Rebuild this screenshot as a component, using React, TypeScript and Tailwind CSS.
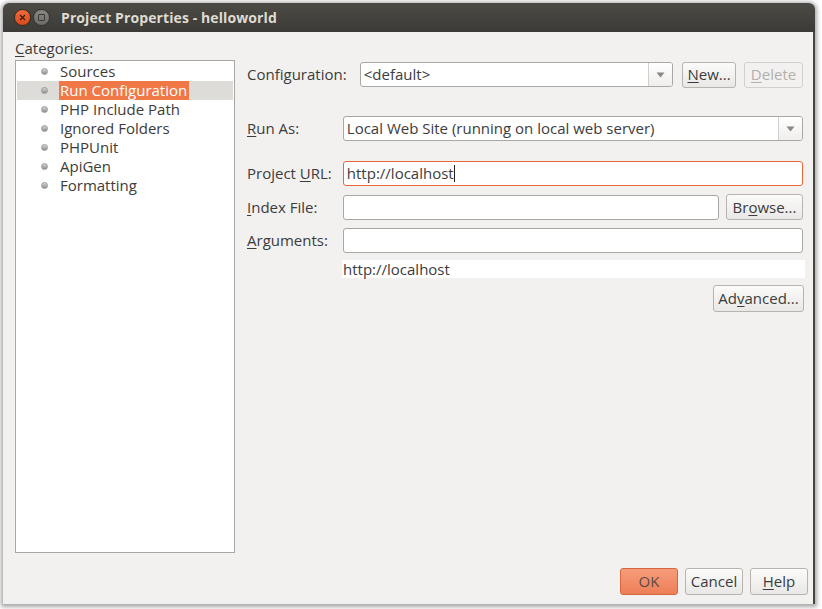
import React from "react";

const font = { fontFamily: '"Open Sans", "Noto Sans", sans-serif' };

function U({ children }: { children: React.ReactNode }) {
  return <span className="underline underline-offset-[2px] decoration-[1px]">{children}</span>;
}

function Btn({ children, w, disabled, primary }: { children: React.ReactNode; w: string; disabled?: boolean; primary?: boolean }) {
  const base = "flex items-center justify-center rounded-[3px] border text-[15px] shrink-0";
  const cls = primary
    ? "border-[#d4653f] bg-gradient-to-b from-[#f59c7a] to-[#ee7f57] text-[#5b4b45]"
    : disabled
    ? "border-[#d3d0cb] bg-[#f2f1f0] text-[#b3b0ab]"
    : "border-[#b8b4ad] bg-gradient-to-b from-[#fbfbfa] to-[#e9e8e6] text-[#3c3c3c]";
  return <div className={`${base} ${cls} ${w}`}>{children}</div>;
}

function Arrow() {
  return (
    <svg width="9" height="6" viewBox="0 0 9 6">
      <path d="M0.5 0.5 L8.5 0.5 L4.5 5.5 Z" fill="#8a8884" />
    </svg>
  );
}

function Combo({ text, w }: { text: string; w: string }) {
  return (
    <div className={`flex h-[25px] ${w} rounded-[3px] border border-[#a9a7a3] bg-white overflow-hidden`}>
      <div className="flex-1 flex items-center pl-[3px] text-[15px] text-[#3c3c3c] whitespace-nowrap">{text}</div>
      <div className="w-[24px] flex items-center justify-center border-l border-[#d2d0cc] bg-gradient-to-b from-white to-[#efeeec]">
        <Arrow />
      </div>
    </div>
  );
}

function Field({ w, focus, children }: { w: string; focus?: boolean; children?: React.ReactNode }) {
  return (
    <div
      className={`flex items-center h-[25px] ${w} rounded-[3px] border ${focus ? "border-[#e9663a]" : "border-[#a9a7a3]"} bg-white pl-[3px] text-[15px] text-[#3c3c3c] whitespace-nowrap`}
    >
      {children}
    </div>
  );
}

const cats = ["Sources", "Run Configuration", "PHP Include Path", "Ignored Folders", "PHPUnit", "ApiGen", "Formatting"];

export default function App() {
  return (
    <div className="w-[822px] h-[609px] bg-white pt-[3px] pl-[3px]" style={font}>
      <div className="w-[812px] h-[601px] flex flex-col rounded-t-[6px] overflow-hidden shadow-[0_1px_4px_2px_rgba(0,0,0,0.35)]">
        {/* title bar */}
        <div className="h-[29px] bg-gradient-to-b from-[#4b4a45] to-[#3c3b37] flex items-center pl-[11px] shrink-0">
          <div className="w-[17px] h-[17px] rounded-full bg-gradient-to-b from-[#f26a3b] to-[#d9491a] border border-[#3a2a22] flex items-center justify-center">
            <svg width="7" height="7" viewBox="0 0 7 7">
              <path d="M1 1 L6 6 M6 1 L1 6" stroke="#3b2115" strokeWidth="1.3" />
            </svg>
          </div>
          <div className="ml-[2px] w-[17px] h-[17px] rounded-full bg-gradient-to-b from-[#8a8883] to-[#6d6b66] border border-[#34332f] flex items-center justify-center">
            <div className="w-[7px] h-[7px] border border-[#3a3935] rounded-[1px]" />
          </div>
          <div className="ml-[11px] text-[14px] font-bold text-[#dfdbd2] tracking-[0.1px]">Project Properties - helloworld</div>
        </div>
        {/* body */}
        <div className="flex-1 bg-[#f2f1f0] border-r-2 border-[#46453f] flex flex-col pt-[3px]">
          <div className="flex flex-1">
            {/* left */}
            <div className="w-[220px] ml-[12px] flex flex-col">
              <div className="h-[25px] pt-[3px] text-[15px] text-[#3c3c3c] leading-[20px]">
                <U>C</U>ategories:
              </div>
              <div className="h-[493px] border border-[#a9a7a3] bg-white pt-[1px]">
                {cats.map((c, i) => (
                  <div key={c} className={`h-[19px] flex items-center mx-[1px] ${i === 1 ? "bg-[#dedcd8]" : ""}`}>
                    <div className="w-[7px] h-[7px] rounded-full bg-gradient-to-b from-[#d6d6d6] to-[#8f8f8f] border border-[#9a9a9a] ml-[24px] mr-[12px]" />
                    <span
                      className={`text-[15px] leading-[19px] ${i === 1 ? "bg-[#f07746] text-white pr-[2px] -ml-[1px] pl-[1px]" : "text-[#3c3c3c]"}`}
                    >
                      {c}
                    </span>
                  </div>
                ))}
              </div>
            </div>
            {/* right */}
            <div className="w-[556px] ml-[12px] flex flex-col pt-[27px]">
              <div className="flex items-center h-[25px]">
                <div className="w-[113px] text-[15px] text-[#3c3c3c]">Configuration:</div>
                <Combo text="<default>" w="w-[314px]" />
                <div className="w-[9px]" />
                <Btn w="w-[54px] h-[26px]">
                  <U>N</U>ew...
                </Btn>
                <div className="w-[8px]" />
                <Btn w="w-[59px] h-[26px]" disabled>
                  <U>D</U>elete
                </Btn>
              </div>
              <div className="flex items-center h-[25px] mt-[29px]">
                <div className="w-[96px] text-[15px] text-[#3c3c3c]">
                  <U>R</U>un As:
                </div>
                <Combo text="Local Web Site (running on local web server)" w="w-[461px]" />
              </div>
              <div className="flex items-center h-[25px] mt-[20px]">
                <div className="w-[96px] text-[15px] text-[#3c3c3c]">
                  Project <U>U</U>RL:
                </div>
                <Field w="w-[461px]" focus>
                  http://localhost<span className="inline-block w-[1px] h-[17px] bg-[#222]" />
                </Field>
              </div>
              <div className="flex items-center h-[26px] mt-[8px]">
                <div className="w-[96px] text-[15px] text-[#3c3c3c]">
                  <U>I</U>ndex File:
                </div>
                <Field w="w-[377px]" />
                <div className="w-[7px]" />
                <Btn w="w-[77px] h-[26px]">
                  Br<U>o</U>wse...
                </Btn>
              </div>
              <div className="flex items-center h-[25px] mt-[8px]">
                <div className="w-[96px] text-[15px] text-[#3c3c3c]">
                  <U>A</U>rguments:
                </div>
                <Field w="w-[461px]" />
              </div>
              <div className="flex items-center h-[18px] mt-[7px] ml-[95px] w-[463px] bg-white text-[15px] text-[#3c3c3c] pl-[1px]">
                http://localhost
              </div>
              <div className="flex justify-end mt-[7px] w-[557px]">
                <Btn w="w-[91px] h-[27px]">
                  Ad<U>v</U>anced...
                </Btn>
              </div>
            </div>
          </div>
          <div className="flex justify-end gap-[7px] pr-[5px] pb-[9px] pt-[12px]">
            <Btn w="w-[58px] h-[27px]" primary>
              OK
            </Btn>
            <Btn w="w-[58px] h-[27px]">Cancel</Btn>
            <Btn w="w-[58px] h-[27px]">
              <U>H</U>elp
            </Btn>
          </div>
        </div>
      </div>
    </div>
  );
}
